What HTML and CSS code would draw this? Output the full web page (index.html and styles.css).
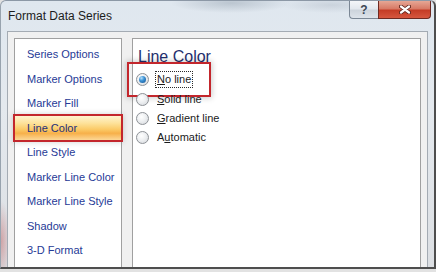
FILE: index.html
```html
<!DOCTYPE html>
<html lang="en">
<head>
    <meta charset="UTF-8">
    <title>Format Data Series</title>
    <link rel="stylesheet" href="styles.css">
</head>
<body>
    <div class="window">
        <div class="titlebar">
            <span class="title">Format Data Series</span>
            <div class="caption-btns">
                <span class="btn-help">?</span>
                <span class="btn-close">
                    <svg width="12" height="9" viewBox="0 0 12 9">
                        <path d="M2 1.5 L10 7.5 M10 1.5 L2 7.5" stroke="#5b2119" stroke-width="4" stroke-linecap="round"/>
                        <path d="M2 1.5 L10 7.5 M10 1.5 L2 7.5" stroke="#ffffff" stroke-width="2.2" stroke-linecap="round"/>
                    </svg>
                </span>
            </div>
        </div>

        <div class="client">
            <div class="frame">
                <ul class="nav">
                    <li class="nav-item">Series Options</li>
                    <li class="nav-item">Marker Options</li>
                    <li class="nav-item">Marker Fill</li>
                    <li class="nav-item selected">Line Color</li>
                    <li class="nav-item">Line Style</li>
                    <li class="nav-item">Marker Line Color</li>
                    <li class="nav-item">Marker Line Style</li>
                    <li class="nav-item">Shadow</li>
                    <li class="nav-item">3-D Format</li>
                </ul>

                <div class="pane">
                    <h2 class="pane-title">Line Color</h2>
                    <ul class="options">
                        <li class="option marked">
                            <span class="radio checked"></span>
                            <span class="label focused"><u>N</u>o line</span>
                        </li>
                        <li class="option">
                            <span class="radio"></span>
                            <span class="label"><u>S</u>olid line</span>
                        </li>
                        <li class="option">
                            <span class="radio"></span>
                            <span class="label"><u>G</u>radient line</span>
                        </li>
                        <li class="option">
                            <span class="radio"></span>
                            <span class="label">A<u>u</u>tomatic</span>
                        </li>
                    </ul>
                </div>
            </div>
        </div>
    </div>
</body>
</html>
```

FILE: styles.css
```css
/* Dialog window */
* {
    box-sizing: border-box;
}

body {
    margin: 0;
    background: #e2e2e2;
    font-family: "Liberation Sans", Arial, sans-serif;
}

.window {
    width: 436px;
    height: 269px;
    display: flex;
    flex-direction: column;
    border-top: 1px solid #8c98a6;
    border-left: 1px solid #98a3ae;
    border-right: 2px solid #4e4e4e;
    border-bottom: 2px solid #4e4e4e;
    border-radius: 6px 6px 0 0;
    background:
        radial-gradient(ellipse 10px 40px at 0 240px, rgba(190, 90, 90, 0.45), transparent),
        linear-gradient(180deg, #dfe7ef 0%, #e4e9ee 40%, #dcdfe3 100%);
    overflow: hidden;
}

/* Title bar */
.titlebar {
    height: 30px;
    display: flex;
    align-items: flex-start;
    background:
        radial-gradient(ellipse 60px 10px at 230px 2px, rgba(120, 135, 150, 0.35), transparent),
        radial-gradient(ellipse 50px 8px at 330px 4px, rgba(140, 150, 165, 0.25), transparent);
}

.title {
    align-self: center;
    padding-left: 7px;
    font-size: 12px;
    color: #1c1c1c;
    margin-top: -1px;
}

.caption-btns {
    margin-left: auto;
    margin-right: 3px;
    display: flex;
}

.btn-help,
.btn-close {
    height: 18px;
    display: flex;
    align-items: center;
    justify-content: center;
    border: 1px solid #7b8795;
    border-top: none;
}

.btn-help {
    width: 29px;
    border-radius: 0 0 0 4px;
    background: linear-gradient(180deg, #f4f6f9 0%, #e3e8ee 45%, #cdd4dc 55%, #dde3ea 100%);
    color: #3c4654;
    font-size: 12px;
    font-weight: bold;
    border-right: none;
}

.btn-close {
    width: 53px;
    border-color: #6e2a22;
    border-radius: 0 0 4px 0;
    background: linear-gradient(180deg, #e6a795 0%, #d77a66 45%, #c43c26 55%, #d6573f 100%);
}

/* Client area */
.client {
    flex: 1;
    display: flex;
    padding: 0 6px 0 6px;
    min-height: 0;
}

.frame {
    flex: 1;
    display: flex;
    gap: 10px;
    padding: 6px 6px 0 6px;
    background: #f0f0f0;
    border: 1px solid #a4abb3;
    border-bottom: none;
    min-height: 0;
}

/* Category list */
.nav {
    width: 108px;
    margin: 0;
    padding: 3px 0 0 0;
    list-style: none;
    background: #ffffff;
    border: 1px solid #a0a0a0;
    border-bottom: none;
}

.nav-item {
    height: 24.5px;
    line-height: 24.5px;
    padding-left: 12px;
    font-size: 11px;
    color: #263a96;
    white-space: nowrap;
}

.nav-item.selected {
    background: linear-gradient(180deg, #fff3cf 0%, #fde29a 30%, #fbcb68 55%, #f7b04a 72%, #fcd796 100%);
    outline: 2px solid #c3262c;
    box-shadow: 0 0 6px 2px rgba(0, 0, 0, 0.18);
    color: #1f2f7a;
}

/* Options pane */
.pane {
    flex: 1;
    background: #ffffff;
    border: 1px solid #a0a0a0;
    border-bottom: none;
}

.pane-title {
    margin: 8px 0 3px 5px;
    font-size: 16px;
    line-height: 20px;
    font-weight: normal;
    color: #1f2f6e;
}

.options {
    margin: 0;
    padding: 0;
    list-style: none;
}

.option {
    position: relative;
    height: 19.4px;
    display: flex;
    align-items: center;
    padding-left: 3px;
    font-size: 11px;
    color: #1b1b1b;
}

.option.marked::after {
    content: "";
    position: absolute;
    left: -6px;
    top: -8px;
    width: 80px;
    height: 31px;
    border: 2px solid #c3262c;
    box-shadow: 0 0 6px 1px rgba(0, 0, 0, 0.2);
    pointer-events: none;
}

.radio {
    width: 13px;
    height: 13px;
    flex: none;
    border-radius: 50%;
    border: 1px solid #8d9196;
    background: radial-gradient(circle at 40% 35%, #ffffff 0%, #eef0f2 45%, #d2d5d9 100%);
    display: flex;
    align-items: center;
    justify-content: center;
}

.radio.checked::before {
    content: "";
    width: 7px;
    height: 7px;
    border-radius: 50%;
    background: radial-gradient(circle at 35% 30%, #b9e2fb 0%, #3c93d6 40%, #14508f 100%);
}

.label {
    margin-left: 6px;
    padding: 1px 1px;
    border: 1px solid transparent;
    line-height: 13px;
}

.label.focused {
    border: 1px dotted #2b2b2b;
}
```
